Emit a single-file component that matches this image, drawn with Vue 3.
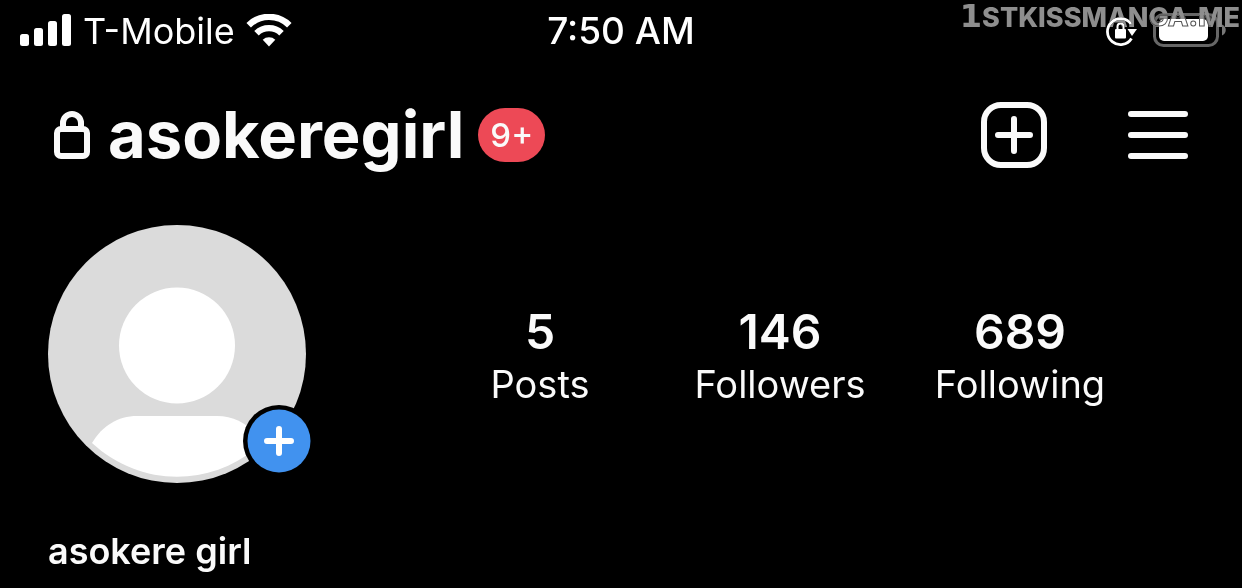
<script setup>
const signal = [
  { x: 0, y: 20, h: 12 },
  { x: 14, y: 14, h: 18 },
  { x: 28, y: 7, h: 25 },
  { x: 42, y: 0, h: 32 },
]
const stats = [
  { count: '5', label: 'Posts' },
  { count: '146', label: 'Followers' },
  { count: '689', label: 'Following' },
]
</script>

<template>
  <div class="screen">
    <div class="status">
      <div class="carrier">
        <svg class="signal" width="52" height="32" viewBox="0 0 52 32" aria-hidden="true">
          <rect v-for="bar in signal" :key="bar.x" :x="bar.x" :y="bar.y" width="9" :height="bar.h" rx="2.5" fill="#fff" />
        </svg>
        <span>T-Mobile</span>
        <svg width="46" height="34" viewBox="0 0 46 34" aria-hidden="true">
          <g fill="none" stroke="#fff" stroke-width="6.4">
            <path d="M2.7 11.2a29 29 0 0 1 40.6 0" />
            <path d="M10.5 19.2a18 18 0 0 1 25 0" />
          </g>
          <path d="M23 32.5l-6.3-6.7a9.2 9.2 0 0 1 12.6 0z" fill="#fff" />
        </svg>
      </div>
      <time class="clock">7:50 AM</time>
      <div class="indicators">
        <svg width="32" height="34" viewBox="0 0 32 34" aria-hidden="true">
          <path d="M26.5 25.5A13 13 0 1 1 26 11" fill="none" stroke="#fff" stroke-width="2.8" />
          <path d="M22.5 16h9.500l-5 7z" fill="#fff" />
          <rect x="10" y="16" width="11" height="9.500" rx="1" fill="#fff" />
          <path d="M12.5 17v-3.500a3 3 0 0 1 6 0V17" fill="none" stroke="#fff" stroke-width="2" />
        </svg>
        <svg width="73" height="34" viewBox="0 0 73 34" aria-hidden="true">
          <rect x="1.5" y="1.5" width="63" height="31" rx="9" fill="none" stroke="#666" stroke-width="3" />
          <rect x="6" y="6" width="49" height="22" rx="5" fill="#fff" />
          <path d="M69 11.5c5 2 5 9 0 11z" fill="#777" />
        </svg>
      </div>
      <div class="watermark"><span class="lead">1</span>STKISSMANGA.ME</div>
      <div class="watermark outline" aria-hidden="true"></div>
    </div>

    <header class="bar">
      <svg width="36" height="48" viewBox="0 0 36 48" aria-hidden="true">
        <rect x="3" y="18" width="30" height="27" rx="4" fill="none" stroke="#fafafa" stroke-width="6" />
        <path d="M9 18v-6a9 9 0 0 1 18 0v6" fill="none" stroke="#fafafa" stroke-width="6" />
      </svg>
      <h1>asokeregirl</h1>
      <span class="count">9+</span>
      <div class="actions">
        <button type="button" aria-label="Create">
          <svg width="66" height="66" viewBox="0 0 66 66">
            <rect x="3" y="3" width="60" height="60" rx="17" fill="none" stroke="#fafafa" stroke-width="6" />
            <path d="M33 17v32M17 33h32" stroke="#fafafa" stroke-width="6" stroke-linecap="round" />
          </svg>
        </button>
        <button type="button" aria-label="Menu">
          <svg width="60" height="66" viewBox="0 0 60 66">
            <path d="M3 12h54M3 33h54M3 54h54" stroke="#fafafa" stroke-width="6" stroke-linecap="round" />
          </svg>
        </button>
      </div>
    </header>

    <main>
      <section class="profile">
        <div class="avatar">
          <svg width="258" height="258" viewBox="0 0 258 258" role="img" aria-label="Profile photo">
            <circle cx="129" cy="129" r="129" fill="#dbdbdb" />
            <circle cx="129" cy="120.5" r="58" fill="#fff" />
            <path d="M44 218C54 201 70 191 89 191h80c19 0 35 10 45 27C165 263 93 263 44 218z" fill="#fff" />
          </svg>
          <button type="button" class="add" aria-label="Add story">
            <svg width="72" height="72" viewBox="0 0 72 72">
              <circle cx="36" cy="36" r="36" fill="#000" />
              <circle cx="36" cy="36" r="31.5" fill="#4192ef" />
              <path d="M36 24v24M24 36h24" stroke="#fff" stroke-width="6" stroke-linecap="round" />
            </svg>
          </button>
        </div>
        <div class="stats">
          <a v-for="stat in stats" :key="stat.label" href="#">
            <strong>{{ stat.count }}</strong>
            <span>{{ stat.label }}</span>
          </a>
        </div>
      </section>
      <p class="name">asokere girl</p>
    </main>
  </div>
</template>

<style>
body {
  background: #000;
}
</style>

<style scoped>
.screen {
  color: #fafafa;
  background: #000;
  font-family: Inter, "Liberation Sans", sans-serif;
}

.status {
  position: relative;
  display: grid;
  grid-template-columns: 1fr auto 1fr;
  align-items: center;
  height: 62px;
  padding: 0 16px 0 20px;
  color: #fff;
  font-size: 36px;
  line-height: 44px;
}

.carrier,
.indicators {
  display: flex;
  align-items: center;
}

.carrier {
  gap: 11px;
}

.signal {
  margin-bottom: 2px;
}

.clock {
  margin-right: 4px;
  font-size: 37px;
  font-weight: 500;
}

.indicators {
  justify-content: flex-end;
  gap: 16px;
  margin-bottom: 2px;
}

.watermark {
  position: absolute;
  top: 0;
  right: 2px;
  color: #8e8e8e;
  font-size: 27px;
  font-weight: 800;
  line-height: 34px;
  mix-blend-mode: lighten;
}

.lead {
  font-family: "DejaVu Sans", sans-serif;
  font-size: 32px;
  line-height: 32px;
}

/* Letter edges that stay visible over the battery's white fill */
.outline {
  clip-path: inset(15px 29px 0 0);
  color: transparent;
  mix-blend-mode: normal;
  -webkit-text-stroke: 1px #555;
}

.outline::after {
  content: "GA.ME";
}

.bar {
  display: flex;
  align-items: center;
  height: 146px;
  padding: 0 54px;
}

h1 {
  margin: 0 14px 0 18px;
  font-size: 65px;
  font-weight: 700;
  line-height: 80px;
}

.count {
  padding: 0 12px;
  border-radius: 27px;
  background: #ed4956;
  font-size: 33px;
  font-weight: 500;
  line-height: 54px;
}

.actions {
  display: flex;
  gap: 81px;
  margin-left: auto;
}

button {
  display: block;
  padding: 0;
  border: 0;
  background: none;
}

svg {
  display: block;
  flex: none;
}

main {
  padding: 17px 48px 12px;
}

.profile {
  display: flex;
  align-items: center;
}

.avatar {
  position: relative;
  flex: none;
}

.add {
  position: absolute;
  right: -9px;
  bottom: 6px;
}

.stats {
  display: grid;
  flex: 1;
  grid-template-columns: repeat(3, 1fr);
  margin: 4px 54px 0 114px;
}

.stats a {
  display: flex;
  flex-direction: column;
  align-items: center;
  color: inherit;
  font-size: 38px;
  line-height: 48px;
  text-decoration: none;
}

strong {
  font-size: 48px;
  font-weight: 600;
  line-height: 56px;
}

.name {
  margin: 46px 0 0;
  font-size: 36px;
  font-weight: 600;
  line-height: 44px;
}
</style>
